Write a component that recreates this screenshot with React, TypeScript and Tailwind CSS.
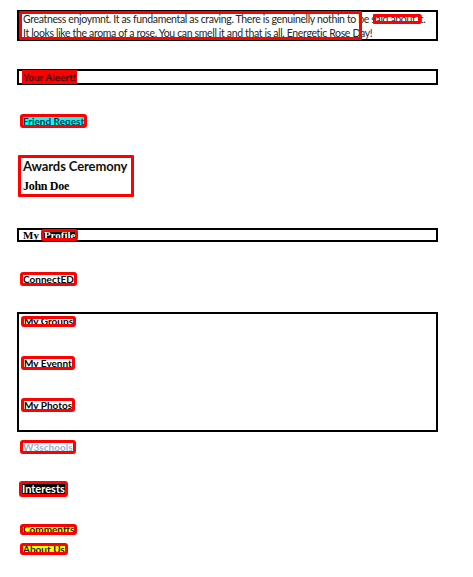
import type { ReactNode } from 'react'

// red annotation outline drawn round a label
function Mark({ children, className = '' }: { children: ReactNode; className?: string }) {
  return (
    <span
      className={`inline-block whitespace-nowrap outline-[3px] outline-[#ff0000] -outline-offset-1 rounded-[1px] ${className}`}
    >
      {children}
    </span>
  )
}

export default function App() {
  return (
    <div className="min-h-[577px] bg-white pl-[17px] pt-[10px] font-['Lato',sans-serif] text-[#1c1c1c]">
      <div className="flex flex-col items-start">
        {/* Intro */}
        <div className="relative box-border h-[31px] w-[421px] border-2 border-black pl-[4px] text-[10.5px] leading-[14px] tracking-[-0.35px] text-[#262626]">
          <div className="whitespace-nowrap">
            Greatness enjoymnt. It as fundamental as craving. There is genuinelly nothin to be said about it.
          </div>
          <div className="whitespace-nowrap">
            It looks like the aroma of a rose. You can smell it and that is all. Energetic Rose Day!
          </div>
          <div className="absolute left-0 top-[-1px] h-[29px] w-[343px] rounded-[1px] border-[3px] border-[#ff0000]" />
          <div className="absolute left-[354px] top-[2px] h-[10px] w-[48px] rounded-[1px] border-[3px] border-[#ff0000]" />
        </div>

        {/* Alert */}
        <div className="mt-[28px] box-border flex h-[16px] w-[421px] items-start border-2 border-black pl-[3px]">
          <span className="-mt-[1px] h-[14px] bg-[#ff0000] px-[1px] text-[10px] font-bold leading-[14px] text-[#3a0000]">
            Your Aleert!
          </span>
        </div>

        {/* Friend request */}
        <Mark className="ml-[5px] mt-[31px] h-[10px] bg-[#00ffff] px-[1px] text-[10px] font-bold leading-[10px] text-[#0d2a40]">
          Friend Reqest
        </Mark>

        {/* Awards */}
        <div className="ml-[1px] mt-[29px] box-border h-[42px] w-[116px] whitespace-nowrap rounded-[1px] border-[3px] border-[#ff0000] pl-[2px]">
          <div className="text-[13px] font-bold leading-[17px] tracking-[-0.1px] text-[#111]">Awards Ceremony</div>
          <div className="mt-[4px] font-['Liberation_Serif',serif] text-[12px] font-bold leading-[14px] tracking-[-0.3px] text-black">
            John Doe
          </div>
        </div>

        {/* Profile */}
        <div className="mt-[31px] box-border flex h-[14px] w-[421px] items-center border-2 border-black pl-[4px] font-['Liberation_Serif',serif] text-[11px] font-bold">
          <span className="leading-[10px] text-black">My</span>
          <Mark className="ml-[4px] h-[8px] bg-black px-[1px] leading-[8px] text-white">Profile</Mark>
        </div>

        {/* ConnectED */}
        <Mark className="ml-[5px] mt-[32px] h-[10px] bg-white px-[1px] text-[10px] font-bold leading-[10px] text-black">
          ConnectED
        </Mark>

        {/* Groups */}
        <div className="mt-[28px] box-border flex h-[120px] w-[421px] flex-col items-start border-2 border-black pl-[4px]">
          <Mark className="mt-[4px] h-[7px] bg-white px-[1px] text-[10px] font-bold leading-[7px] text-black">
            My Groups
          </Mark>
          <Mark className="mt-[33px] h-[10px] bg-white px-[1px] text-[10px] font-bold leading-[10px] text-black">
            My Evennt
          </Mark>
          <Mark className="mt-[32px] h-[10px] bg-white px-[1px] text-[10px] font-bold leading-[10px] text-black">
            My Photos
          </Mark>
        </div>

        {/* W3schools */}
        <Mark className="ml-[5px] mt-[10px] h-[10px] bg-white px-[1px] text-[10px] font-bold leading-[10px] text-[#95b3d7]">
          W3schools
        </Mark>

        {/* Interests */}
        <Mark className="ml-[4px] mt-[31px] h-[12px] bg-black px-[1px] text-[11px] font-bold leading-[12px] text-white">
          Interests
        </Mark>

        {/* Comments */}
        <Mark className="ml-[5px] mt-[31px] h-[7px] bg-[#ffff00] px-[1px] text-[10px] font-bold leading-[7px] text-[#1a1a00]">
          Commentts
        </Mark>

        {/* About */}
        <Mark className="ml-[5px] mt-[12px] h-[8px] bg-[#ffff00] px-[1px] text-[10px] font-bold leading-[8px] text-[#1a1a00]">
          About Us
        </Mark>
      </div>
    </div>
  )
}
